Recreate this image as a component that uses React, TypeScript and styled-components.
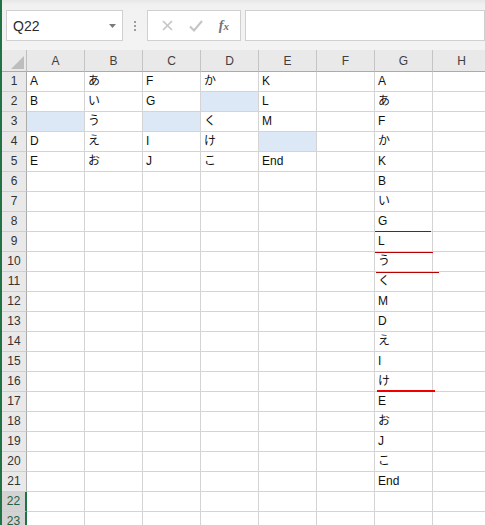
import React, {FC} from 'react';
import styled, {createGlobalStyle} from 'styled-components';

const COLS = ['A', 'B', 'C', 'D', 'E', 'F', 'G', 'H'];

const LEFT: string[][] = [
  ['A', 'あ', 'F', 'か', 'K'],
  ['B', 'い', 'G', '', 'L'],
  ['', 'う', '', 'く', 'M'],
  ['D', 'え', 'I', 'け', ''],
  ['E', 'お', 'J', 'こ', 'End'],
];

const G_COL = [
  'A', 'あ', 'F', 'か', 'K', 'B', 'い', 'G', 'L', 'う', 'く',
  'M', 'D', 'え', 'I', 'け', 'E', 'お', 'J', 'こ', 'End',
];

// cells with the light blue fill, as "row,col"
const FILLED = new Set(['2,3', '3,0', '3,2', '4,4']);

const SELECTED_ROWS = [22, 23];

// hand drawn lines lying over column G
const LINES = [
  {top: 181, left: 373, width: 56, height: 1, color: '#b80000'},
  {top: 202, left: 373, width: 58, height: 1, color: '#b80000'},
  {top: 222, left: 374, width: 63, height: 1, color: '#b80000'},
  {top: 340, left: 375, width: 58, height: 2, color: '#f20000'},
];

const cellText = (row: number, col: number) => {
  if (col === 6) return G_COL[row - 1] ?? '';
  if (row <= 5 && col < 5) return LEFT[row - 1][col];
  return '';
};

const App: FC = () => {
  const rows = Array.from({length: 23}, (_, i) => i + 1);

  return (
    <>
      <GlobalStyle />
      <Window>
        <Toolbar>
          <NameBox>
            <span>Q22</span>
            <DropArrow width="7" height="4" viewBox="0 0 7 4">
              <polygon points="0,0 7,0 3.5,4" fill="#7a7a7a" />
            </DropArrow>
          </NameBox>
          <Grip>
            <i />
            <i />
            <i />
          </Grip>
          <FormulaButtons>
            <svg width="11" height="11" viewBox="0 0 11 11">
              <path d="M1 1 L10 10 M10 1 L1 10" stroke="#c4c4c4" strokeWidth="1.6" />
            </svg>
            <svg width="14" height="12" viewBox="0 0 14 12">
              <path d="M1 6.5 L5 10.5 L13 1" stroke="#c4c4c4" strokeWidth="2" fill="none" />
            </svg>
            <Fx>
              f<span>x</span>
            </Fx>
          </FormulaButtons>
          <FormulaInput />
        </Toolbar>

        <Sheet>
          <Corner>
            <svg width="13" height="13" viewBox="0 0 13 13">
              <polygon points="13,0 13,13 0,13" fill="#bdbdbd" />
            </svg>
          </Corner>
          {COLS.map(c => (
            <ColHeader key={c}>{c}</ColHeader>
          ))}

          {rows.map(r => (
            <React.Fragment key={r}>
              <RowHeader $selected={SELECTED_ROWS.includes(r)}>{r}</RowHeader>
              {COLS.map((c, ci) => (
                <Cell key={c} $filled={FILLED.has(`${r},${ci}`)}>
                  {cellText(r, ci)}
                </Cell>
              ))}
            </React.Fragment>
          ))}

          {LINES.map((l, i) => (
            <DrawnLine
              key={i}
              $color={l.color}
              style={{top: l.top, left: l.left, width: l.width, height: l.height}}
            />
          ))}
        </Sheet>
      </Window>
    </>
  );
};

export default App;

const GlobalStyle = createGlobalStyle`
  html, body {
    margin: 0;
    padding: 0;
    background: #ffffff;
    overflow: hidden;
  }
`;

const Window = styled.div`
  width: 485px;
  height: 525px;
  box-sizing: border-box;
  border-left: 2px solid #217346;
  overflow: hidden;
  background: #ffffff;
  font-family: 'Liberation Sans', 'Noto Sans CJK JP', sans-serif;
`;

const Toolbar = styled.div`
  display: flex;
  align-items: flex-start;
  height: 50px;
  box-sizing: border-box;
  padding: 10px 0 0 4px;
  background: linear-gradient(#e7e7e7 0, #f1f1f1 5px, #f3f3f3 100%);
`;

const NameBox = styled.div`
  display: flex;
  align-items: center;
  justify-content: space-between;
  width: 142px;
  height: 31px;
  box-sizing: border-box;
  padding: 0 6px 0 6px;
  background: #ffffff;
  border: 1px solid #d0d0d0;
  color: #2b2b2b;
  font-size: 14px;
`;

const DropArrow = styled.svg`
  margin-top: 1px;
`;

const Grip = styled.div`
  display: flex;
  flex-direction: column;
  align-items: center;
  justify-content: center;
  gap: 2px;
  width: 30px;
  height: 31px;

  i {
    display: block;
    width: 2px;
    height: 2px;
    background: #9c9c9c;
  }
`;

const FormulaButtons = styled.div`
  display: flex;
  align-items: center;
  justify-content: space-between;
  width: 110px;
  height: 31px;
  box-sizing: border-box;
  padding: 0 11px 0 14px;
  background: #ffffff;
  border: 1px solid #d0d0d0;
`;

const Fx = styled.span`
  font-family: 'Liberation Serif', serif;
  font-style: italic;
  font-weight: bold;
  font-size: 14px;
  color: #737373;
  line-height: 1;

  span {
    font-size: 11px;
  }
`;

const FormulaInput = styled.div`
  width: 240px;
  flex-shrink: 0;
  height: 31px;
  margin-left: 4px;
  box-sizing: border-box;
  background: #ffffff;
  border: 1px solid #d0d0d0;
`;

const Sheet = styled.div`
  position: relative;
  display: grid;
  grid-template-columns: 25px repeat(8, 58px);
  grid-template-rows: 22px;
  grid-auto-rows: 20px;
`;

const Corner = styled.div`
  display: flex;
  align-items: flex-end;
  justify-content: flex-end;
  padding: 0 2px 2px 0;
  box-sizing: border-box;
  background: #e9e9e9;
  border-right: 1px solid #bdbdbd;
  border-bottom: 1px solid #ababab;
`;

const ColHeader = styled.div`
  display: flex;
  align-items: center;
  justify-content: center;
  box-sizing: border-box;
  padding-top: 1px;
  background: #e9e9e9;
  border-right: 1px solid #c4c4c4;
  border-bottom: 1px solid #ababab;
  color: #404040;
  font-size: 12px;
`;

const RowHeader = styled.div<{$selected?: boolean}>`
  display: flex;
  justify-content: center;
  box-sizing: border-box;
  padding-top: 1px;
  line-height: 17px;
  background: ${p => (p.$selected ? '#d3d3d3' : '#e9e9e9')};
  border-right: ${p => (p.$selected ? '2px solid #217346' : '1px solid #ababab')};
  border-bottom: 1px solid #cfcfcf;
  color: ${p => (p.$selected ? '#245f45' : '#333333')};
  font-size: 12px;
`;

const Cell = styled.div<{$filled?: boolean}>`
  box-sizing: border-box;
  padding: 1px 0 0 3px;
  line-height: 17px;
  white-space: nowrap;
  overflow: hidden;
  background: ${p => (p.$filled ? '#dce8f5' : '#ffffff')};
  border-right: 1px solid #d4d4d4;
  border-bottom: 1px solid #d4d4d4;
  color: #111111;
  font-size: 12px;
`;

const DrawnLine = styled.div<{$color: string}>`
  position: absolute;
  background: ${p => p.$color};
`;
